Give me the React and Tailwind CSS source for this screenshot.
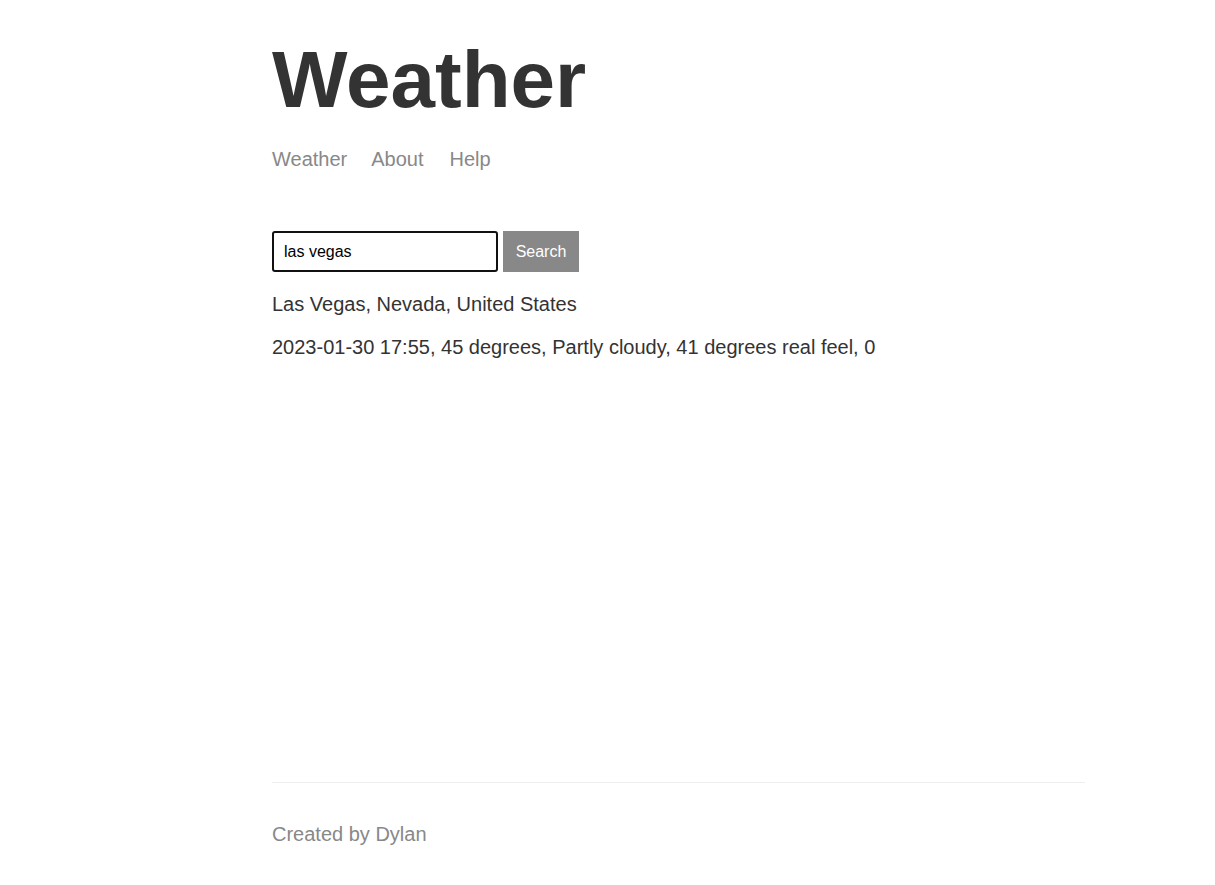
import React, { useState } from "react";

const App = () => {
  const [query, setQuery] = useState("las vegas");

  return (
    <div className="min-h-screen bg-white font-['Liberation_Sans',Arial,sans-serif]">
      <div className="ml-[272px] w-[813px] min-h-[885px] flex flex-col">
        <div className="flex-1">
          <h1 className="text-[80px] leading-none font-bold text-[#333] mt-[40px]">
            Weather
          </h1>
          <nav className="flex text-[20px] text-[#888] mt-[24px]">
            <a href="#" className="mr-[24px]">Weather</a>
            <a href="#" className="mr-[26px]">About</a>
            <a href="#">Help</a>
          </nav>

          <form
            className="flex mt-[57px]"
            onSubmit={(e) => e.preventDefault()}
          >
            <input
              type="text"
              value={query}
              onChange={(e) => setQuery(e.target.value)}
              className="w-[226px] h-[41px] border-2 border-[#111] rounded-[3px] px-[10px] text-[16px] text-black outline-none"
            />
            <button
              type="submit"
              className="ml-[5px] w-[76px] h-[41px] bg-[#888] text-white text-[16px]"
            >
              Search
            </button>
          </form>

          <p className="text-[20px] text-[#333] leading-[23px] mt-[21px]">
            Las Vegas, Nevada, United States
          </p>
          <p className="text-[20px] text-[#333] leading-[23px] mt-[20px]">
            2023-01-30 17:55, 45 degrees, Partly cloudy, 41 degrees real feel, 0
          </p>
        </div>

        <footer className="border-t border-[#eee] mb-[39px] pt-[40px] text-[20px] text-[#888] leading-[23px]">
          Created by Dylan
        </footer>
      </div>
    </div>
  );
};

export default App;
